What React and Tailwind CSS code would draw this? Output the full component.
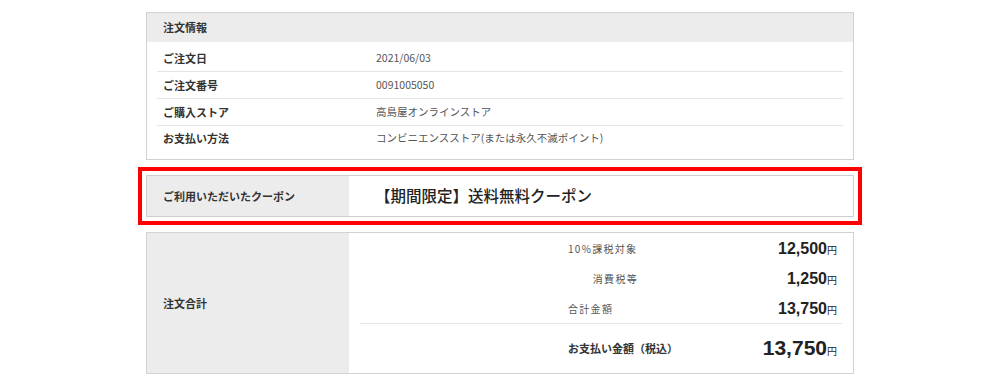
const jp = { fontFamily: '"Noto Sans CJK JP", "Noto Sans", sans-serif' };

const orderInfo = [
  { label: 'ご注文日', value: '2021/06/03' },
  { label: 'ご注文番号', value: '0091005050' },
  { label: 'ご購入ストア', value: '高島屋オンラインストア' },
  { label: 'お支払い方法', value: 'コンビニエンスストア(または永久不滅ポイント)' },
];

const totals = [
  { label: '10%課税対象', amount: '12,500', right: false },
  { label: '消費税等', amount: '1,250', right: true },
  { label: '合計金額', amount: '13,750', right: false },
];

function Amount({ value, big }) {
  return (
    <span className="whitespace-nowrap text-[#222]" style={{ fontFamily: '"Liberation Sans", Arial, sans-serif' }}>
      <span className={big ? 'text-[21px] font-bold' : 'text-[16px] font-bold'}>{value}</span>
      <span className="text-[10px]" style={jp}>円</span>
    </span>
  );
}

export default function App() {
  return (
    <div className="w-[1000px] h-[384px] bg-white pt-[12px] flex flex-col items-center" style={jp}>
      {/* 注文情報 */}
      <div className="w-[708px] border border-[#d2d2d2] pb-[9px]">
        <div className="h-[29px] bg-[#ececec] flex items-center pl-[16px] text-[11px] font-bold text-[#333]">注文情報</div>
        <div className="px-[10px] pt-[3px]">
          {orderInfo.map((row, i) => (
            <div
              key={row.label}
              className={`flex items-center pl-[6px] ${i < orderInfo.length - 1 ? 'h-[27px] border-b border-[#e4e4e4]' : 'h-[24px]'}`}
            >
              <div className="w-[213px] shrink-0 text-[11px] font-bold text-[#333]">{row.label}</div>
              <div className="text-[10.5px] text-[#555]">{row.value}</div>
            </div>
          ))}
        </div>
      </div>

      {/* ご利用クーポン */}
      <div className="mt-[7px] w-[724px] border-4 border-[#ff0000] p-[4px]">
        <div className="h-[42px] border border-[#cfcfcf] flex">
          <div className="w-[202px] shrink-0 bg-[#ececec] flex items-center pl-[16px] text-[11px] font-bold text-[#333]">
            ご利用いただいたクーポン
          </div>
          <div className="flex-1 flex items-center pl-[26px] text-[15.5px] font-medium text-[#222]">
            【期間限定】送料無料クーポン
          </div>
        </div>
      </div>

      {/* 注文合計 */}
      <div className="mt-[7px] w-[708px] h-[142px] border border-[#d2d2d2] flex">
        <div className="w-[202px] shrink-0 bg-[#ececec] flex items-center pl-[16px] text-[11px] font-bold text-[#333]">
          注文合計
        </div>
        <div className="flex-1 px-[11px]">
          {totals.map((row) => (
            <div key={row.label} className="h-[30px] flex items-center pl-[208px] pr-[5px]">
              <div className={`w-[70px] shrink-0 text-[10px] tracking-[1.3px] text-[#555] whitespace-nowrap ${row.right ? 'text-right' : ''}`}>
                {row.label}
              </div>
              <div className="flex-1 text-right">
                <Amount value={row.amount} />
              </div>
            </div>
          ))}
          <div className="border-t border-[#e4e4e4] h-[49px] flex items-center pl-[208px] pr-[5px]">
            <div className="w-[70px] shrink-0 text-[11px] font-bold text-[#333] whitespace-nowrap">お支払い金額（税込）</div>
            <div className="flex-1 text-right">
              <Amount value="13,750" big />
            </div>
          </div>
        </div>
      </div>
    </div>
  );
}
